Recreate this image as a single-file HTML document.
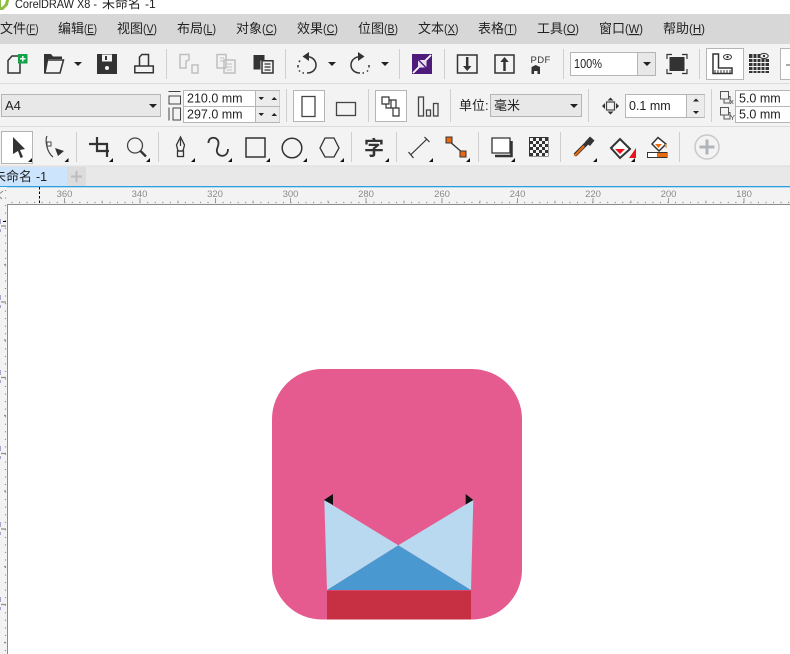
<!DOCTYPE html>
<html><head><meta charset="utf-8"><style>
html,body{margin:0;padding:0;background:#fff;width:790px;height:654px;overflow:hidden}
svg{display:block;position:absolute;left:0;top:0}
text{font-family:"Liberation Sans","Noto Sans CJK SC",sans-serif}
.m{font-size:13px;fill:#222}
.l{font-size:11.5px;fill:#222}
.f{font-size:12.5px;fill:#222}
.r{font-size:9.5px;fill:#8a8a8a;text-anchor:middle}
.s{stroke:#cfcfcf;stroke-width:1;fill:none}
.i{stroke:#333;stroke-width:1.5;fill:none}
.u{text-decoration:underline}
</style></head><body>
<svg width="790" height="654" viewBox="0 0 790 654" xmlns="http://www.w3.org/2000/svg">
<!-- backgrounds -->
<rect width="790" height="654" fill="#fff"/>
<rect y="14" width="790" height="30" fill="#d7d7d7"/>
<rect y="44" width="790" height="160" fill="#f3f3f3"/>
<path d="M0 83.5H790M0 126.5H790" stroke="#dcdcdc" stroke-width="1"/>
<rect y="166" width="790" height="20" fill="#e8e8e8"/>
<path d="M0 166H790" stroke="#dcdcdc"/>
<rect y="186" width="790" height="1.3" fill="#2a9fdf"/>
<rect x="0" y="187" width="7" height="467" fill="#f3f3f3"/>
<rect x="7" y="204" width="783" height="450" fill="#fff"/>
<path d="M7.500 654V204.500H790" stroke="#8c8c8c" stroke-width="1" fill="none"/>

<!-- title -->
<path d="M0 0H9L8 5L3 10H0Z" fill="#8cbf3f"/>
<path d="M1 0H6L5 4L2 7H1Z" fill="#fff"/>
<text x="15" y="8" font-size="11.7" fill="#222" textLength="82" lengthAdjust="spacingAndGlyphs">CorelDRAW X8 -</text>
<text x="102" y="8" font-size="13" fill="#222">未命名</text>
<text x="145" y="8" font-size="12" fill="#222">-1</text>

<!-- menu -->
<text class="m" x="0" y="33">文件</text><text class="l" x="26" y="33" textLength="12.500" lengthAdjust="spacingAndGlyphs">(<tspan class="u">F</tspan>)</text>
<text class="m" x="58" y="33">编辑</text><text class="l" x="84" y="33" textLength="13" lengthAdjust="spacingAndGlyphs">(<tspan class="u">E</tspan>)</text>
<text class="m" x="117" y="33">视图</text><text class="l" x="143" y="33" textLength="14" lengthAdjust="spacingAndGlyphs">(<tspan class="u">V</tspan>)</text>
<text class="m" x="177" y="33">布局</text><text class="l" x="203" y="33" textLength="13" lengthAdjust="spacingAndGlyphs">(<tspan class="u">L</tspan>)</text>
<text class="m" x="236" y="33">对象</text><text class="l" x="262" y="33" textLength="15" lengthAdjust="spacingAndGlyphs">(<tspan class="u">C</tspan>)</text>
<text class="m" x="297" y="33">效果</text><text class="l" x="323" y="33" textLength="15" lengthAdjust="spacingAndGlyphs">(<tspan class="u">C</tspan>)</text>
<text class="m" x="358" y="33">位图</text><text class="l" x="384" y="33" textLength="14" lengthAdjust="spacingAndGlyphs">(<tspan class="u">B</tspan>)</text>
<text class="m" x="418" y="33">文本</text><text class="l" x="444" y="33" textLength="14.500" lengthAdjust="spacingAndGlyphs">(<tspan class="u">X</tspan>)</text>
<text class="m" x="478" y="33">表格</text><text class="l" x="504" y="33" textLength="13" lengthAdjust="spacingAndGlyphs">(<tspan class="u">T</tspan>)</text>
<text class="m" x="537" y="33">工具</text><text class="l" x="563" y="33" textLength="16" lengthAdjust="spacingAndGlyphs">(<tspan class="u">O</tspan>)</text>
<text class="m" x="599" y="33">窗口</text><text class="l" x="625" y="33" textLength="18" lengthAdjust="spacingAndGlyphs">(<tspan class="u">W</tspan>)</text>
<text class="m" x="663" y="33">帮助</text><text class="l" x="689" y="33" textLength="16" lengthAdjust="spacingAndGlyphs">(<tspan class="u">H</tspan>)</text>

<!-- toolbar separators -->
<path class="s" d="M166.500 49V79M285.500 49V79M399.500 49V79M444.500 49V79M563.500 49V79M699.500 49V79"/>
<path class="s" d="M286.500 89V122M368.500 89V122M450.500 89V122M588.500 89V122M711.500 89V122"/>
<path class="s" d="M76.500 132V162M158.500 132V162M351.500 132V162M396.500 132V162M478.500 132V162M560.500 132V162M679.500 132V162"/>

<!-- new -->
<path class="i" d="M8 60.500L12 56H20V73H8Z"/>
<rect x="18" y="54" width="9.500" height="9.500" fill="#13a24a"/>
<path d="M22.800 56V61.500M20 58.800H25.500" stroke="#fff" stroke-width="1.400"/>
<!-- open -->
<path d="M44 73V54H51L53 56.500H62V59H48L45.500 73Z" fill="#333"/>
<path class="i" d="M47.500 60H63.500L60 73H45Z"/>
<path d="M74 62H82L78 66Z" fill="#222"/>
<!-- save -->
<path d="M97 54H117V74H97Z" fill="#333"/>
<rect x="102" y="54.500" width="10" height="7" fill="#f3f3f3"/>
<rect x="105" y="56" width="2" height="4" fill="#333"/>
<circle cx="107" cy="68" r="2" fill="#f3f3f3"/>
<!-- print -->
<path class="i" d="M139.500 66V57L142 54.500H148.500V66M134.800 66H153.300V72.800H134.800Z"/>
<!-- copy/paste group -->
<g stroke="#c0c0c0" stroke-width="1.500" fill="none">
<path d="M180 54.500H189V60L186 61V68H180Z"/>
<path d="M192 65H198V73H192Z"/>
<path d="M217 54.500H226V68H217ZM224 60H235V73H224Z"/>
<path d="M220 58H224M220 61H224M227 64H232M227 67H232M227 70H232" stroke-width="1"/>
</g>
<path d="M254 55.500H264V60H260V69H254Z" fill="#333" stroke="#333"/>
<path class="i" d="M262 60.800H273V73H262Z"/>
<path d="M264.500 64H270.500M264.500 67H270.500M264.500 70H270.500" stroke="#333" stroke-width="1.200"/>
<!-- undo redo -->
<path class="i" d="M306 56.500C312 56.500 316 60 316 65C316 70 312 73 307 73"/>
<path d="M304 73h-1.500M300 71.500l-1-1M298 67.500v-2.500M299 62l1-1.500" stroke="#333" stroke-width="1.500" fill="none"/>
<path d="M309 52V61L302.500 56.500Z" fill="#333"/>
<path d="M328 62H336L332 66Z" fill="#222"/>
<path class="i" d="M360 56.500C355 57 351 60 351 65C351 70 355 73 360 73"/>
<path d="M362.500 73h1.500M367 71.500l1-1M369 67.500v-2.500" stroke="#333" stroke-width="1.500" fill="none"/>
<path d="M358 52V61L364.500 56.500Z" fill="#333"/>
<path d="M381 62H389L385 66Z" fill="#222"/>
<!-- corel connect -->
<rect x="412" y="54" width="20" height="20" fill="#4f1b7a"/>
<path d="M431 55L424 62M413 73L420 66" stroke="#fff" stroke-width="1.800"/>
<path d="M418 60.500L425 67.500L418 67.500ZM426.500 67L419.500 60L426.500 60Z" fill="#e8e0ef"/>
<!-- import export -->
<path class="i" d="M457.500 55H477V73H457.500Z"/>
<path d="M467.200 57V67" stroke="#333" stroke-width="2.500"/>
<path d="M463 66H471.500L467.200 71Z" fill="#333"/>
<path class="i" d="M495 55H514V73H495Z"/>
<path d="M504.500 61V71" stroke="#333" stroke-width="2.500"/>
<path d="M500.300 62H508.800L504.500 57Z" fill="#333"/>
<text x="530.500" y="63" font-size="9.500" fill="#333" letter-spacing=".4">PDF</text>
<path d="M531.500 74V67L535.700 65L540 67V74Z" fill="#333"/>
<path d="M534 74V71H537.500V74" fill="#eee"/>
<!-- zoom combo -->
<rect x="570.500" y="52.500" width="85" height="23" fill="#fff" stroke="#b5b5b5"/>
<rect x="638" y="53" width="17" height="22" fill="#e8e8e8"/>
<path d="M637.500 53V75" stroke="#b5b5b5"/>
<text x="574" y="68" class="f" textLength="28" lengthAdjust="spacingAndGlyphs">100%</text>
<path d="M643 62H651L647 66Z" fill="#222"/>
<!-- full page -->
<path d="M667 59V54.500H672M682 54.500H687V59M687 69V73.500H682M672 73.500H667V69" stroke="#333" stroke-width="1.200" fill="none"/>
<rect x="669.500" y="57" width="15" height="14" fill="#333"/>
<!-- rulers toggle -->
<rect x="706.500" y="48.500" width="37" height="31" fill="#fff" stroke="#b5b5b5"/>
<path class="i" d="M713 54V73.500H732V68H718.500V54Z"/>
<path d="M715 70v3M718 70v3M721 70v3M724 70v3M727 70v3M730 70v3" stroke="#333"/>
<ellipse cx="727.500" cy="57" rx="4" ry="2.500" fill="none" stroke="#333" stroke-width="1"/>
<circle cx="727.500" cy="57" r="1.200" fill="#333"/>
<path fill="#333" d="M749 54H760V58H769V73H749Z"/>
<path d="M749 58.500H769M749 62.500H769M749 66.500H769M749 70.500H769M753 54V73M757 54V73M761 58V73M765 58V73" stroke="#f3f3f3" stroke-width="1"/>
<ellipse cx="764" cy="56" rx="4.200" ry="2.600" fill="#f3f3f3" stroke="#333"/>
<circle cx="764" cy="56" r="1.200" fill="#333"/>
<rect x="780.500" y="48.500" width="12" height="31" fill="#fff" stroke="#b5b5b5"/>
<path d="M786 65H790" stroke="#555"/>

<!-- property bar -->
<rect x="1.500" y="94.500" width="159" height="22" fill="#e8e8e8" stroke="#b5b5b5"/>
<text x="5" y="110" font-size="13" fill="#222">A4</text>
<path d="M149 104H157L153 108Z" fill="#222"/>
<path d="M168.500 91.500H180.500" stroke="#444" fill="none"/>
<rect x="169" y="96" width="11.500" height="8" fill="none" stroke="#444"/>
<path d="M169 107.500V120.500" stroke="#444"/>
<rect x="173" y="108" width="7.500" height="12" fill="none" stroke="#444"/>
<rect x="183.500" y="90.500" width="96" height="32" fill="#fff" stroke="#b5b5b5"/>
<rect x="256" y="91" width="23.500" height="31" fill="#ececec"/>
<path d="M183.500 106.500H279.500M255.500 90.500V122.500" stroke="#b5b5b5"/>
<text x="187" y="102.500" class="f">210.0 mm</text>
<text x="187" y="118.500" class="f">297.0 mm</text>
<path d="M258.500 97H264L261.200 100ZM271.500 100H277L274.200 97ZM258.500 113H264L261.200 116ZM271.500 116H277L274.200 113Z" fill="#222"/>
<rect x="293.500" y="90.500" width="31" height="31" fill="#fff" stroke="#b5b5b5"/>
<rect x="302" y="96.500" width="13" height="20" fill="none" stroke="#444" stroke-width="1.300"/>
<rect x="336.500" y="102.500" width="19" height="13" fill="none" stroke="#444" stroke-width="1.300"/>
<rect x="375.500" y="90.500" width="31" height="31" fill="#fff" stroke="#b5b5b5"/>
<path d="M382 97H389V104H382ZM386 104V108H391V100H389M391 100H396V108H391ZM393 108H399V116H393Z" fill="none" stroke="#333" stroke-width="1.200"/>
<rect x="418.500" y="97" width="5" height="19" fill="none" stroke="#444" stroke-width="1.300"/>
<rect x="426.500" y="110" width="4" height="6" fill="none" stroke="#444" stroke-width="1.300"/>
<rect x="433.500" y="103.500" width="4.500" height="12.500" fill="none" stroke="#444" stroke-width="1.300"/>
<text x="459" y="110" font-size="13" fill="#222">单位:</text>
<rect x="490.500" y="94.500" width="91" height="22" fill="#e8e8e8" stroke="#b5b5b5"/>
<text x="494" y="110" font-size="13" fill="#222">毫米</text>
<path d="M570 104H578L574 108Z" fill="#222"/>
<rect x="606.500" y="102" width="8" height="8" fill="none" stroke="#444" stroke-width="1.200"/>
<path d="M610.500 97.500L613.500 100.500H607.500ZM610.500 114.500L613.500 111.500H607.500ZM602 106L605 103V109ZM619 106L616 103V109Z" fill="#333"/>
<rect x="625.500" y="94.500" width="79" height="23" fill="#fff" stroke="#b5b5b5"/>
<rect x="687" y="95" width="17.500" height="22" fill="#ececec"/>
<path d="M686.500 94.500V117.500" stroke="#b5b5b5"/>
<text x="629" y="110" class="f">0.1 mm</text>
<path d="M693 101.500H699L696 98.500ZM693 111H699L696 114Z" fill="#222"/>
<path d="M720.500 91.500H728.500V99H720.500ZM724 99V103H730V96.500H728.500" fill="none" stroke="#555"/>
<path d="M720.500 107.500H728.500V115H720.500ZM724 115V119H730V112.500H728.500" fill="none" stroke="#555"/>
<text x="730" y="104" font-size="7.500" fill="#444">x</text>
<text x="730" y="120" font-size="7.500" fill="#444">Y</text>
<rect x="735.500" y="90.500" width="60" height="32" fill="#fff" stroke="#b5b5b5"/>
<path d="M735.500 106.500H790" stroke="#b5b5b5"/>
<text x="739" y="102.500" class="f">5.0 mm</text>
<text x="739" y="118.500" class="f">5.0 mm</text>

<!-- toolbox -->
<rect x="1.500" y="131.500" width="31" height="32" fill="#fff" stroke="#b5b5b5"/>
<path d="M13 137L25 149L20 150L23 157L20.500 158L18 151L13 154Z" fill="#333"/>
<path d="M47 136C45 140 46.500 152 53 157" fill="none" stroke="#444" stroke-width="1.200"/>
<rect x="47" y="142" width="4" height="4" fill="#fff" stroke="#444"/>
<path d="M55 148L64 151L58 156Z" fill="#333"/>
<path d="M89 144H107V157M97 137V151H109" fill="none" stroke="#333" stroke-width="2.200"/>
<circle cx="135" cy="145.500" r="7.500" fill="none" stroke="#444" stroke-width="1.300"/>
<path d="M140.500 151L146 156.500" stroke="#333" stroke-width="2.300"/>
<path d="M180.500 137L176.500 145L178 151H183L184.500 145Z" fill="none" stroke="#333" stroke-width="1.300"/>
<path d="M180.500 139V146" stroke="#333" stroke-width="1.200"/>
<rect x="177.500" y="151" width="6" height="5.500" fill="none" stroke="#333" stroke-width="1.300"/>
<path d="M208.500 143C208 136 218.500 136 218.500 143C218.500 147 216 149 217 152C218.500 157.500 228 157.500 228 149" fill="none" stroke="#333" stroke-width="1.800"/>
<rect x="246" y="138" width="19" height="19" fill="none" stroke="#333" stroke-width="1.500"/>
<circle cx="292" cy="148" r="9.800" fill="none" stroke="#333" stroke-width="1.500"/>
<path d="M325 138H334L339 148L334 157H325L320 148Z" fill="none" stroke="#333" stroke-width="1.300"/>
<text x="364" y="155" font-size="20" font-weight="700" fill="#333">字</text>
<path d="M410.500 155L427 139M408.500 152L413.500 158M424.500 137L429.500 142" stroke="#333" stroke-width="1.200"/>
<path d="M449 141L464 154" stroke="#333" stroke-width="1.300"/>
<rect x="446" y="137" width="6" height="6" fill="#e86a10" stroke="#333"/>
<rect x="460" y="151" width="6" height="6" fill="#e86a10" stroke="#333"/>
<path d="M492 138H510V153H492Z" fill="#fff" stroke="#333" stroke-width="1.300"/>
<path d="M511.500 141V156H495" fill="none" stroke="#333" stroke-width="2.500"/>
<rect x="529" y="137" width="19.500" height="19.500" fill="#333"/>
<path d="M530 138h3v3h-3zM536 138h3v3h-3zM542 138h3v3h-3zM533 141h3v3h-3zM539 141h3v3h-3zM545 141h3v3h-3zM530 144h3v3h-3zM536 144h3v3h-3zM542 144h3v3h-3zM533 147h3v3h-3zM539 147h3v3h-3zM545 147h3v3h-3zM530 150h3v3h-3zM536 150h3v3h-3zM542 150h3v3h-3zM533 153h3v3h-3zM539 153h3v3h-3zM545 153h3v3h-3z" fill="#f3f3f3"/>
<path d="M575 155L588 142" stroke="#333" stroke-width="4"/>
<path d="M574.500 156L584 146" stroke="#e86a10" stroke-width="2.200"/>
<path d="M585 142L590 136.500L594.500 140.500L590 146Z" fill="#333"/>
<path d="M611 148L620 139L630 149L620 158Z" fill="#fff" stroke="#333" stroke-width="2"/>
<path d="M615 149H625L620 154Z" fill="#e8121c"/>
<path d="M636 158V148L629 158Z" fill="#e8121c"/>
<path d="M652 144L658 137.500L666 144L659 151Z" fill="#fff" stroke="#333" stroke-width="1.500"/>
<path d="M655 144H662L658.500 148Z" fill="#e86a10"/>
<rect x="647.500" y="152.500" width="19.500" height="5" fill="#fff" stroke="#333"/>
<rect x="657" y="153" width="10" height="4" fill="#e86a10"/>
<path d="M666 148V144" stroke="#e8a060" stroke-width="1.500"/>
<circle cx="707" cy="147" r="12" fill="none" stroke="#c9c9c9" stroke-width="1.500"/>
<path d="M707 139.500V154.500M699.500 147H714.500" stroke="#b0b5bb" stroke-width="3"/>
<!-- corner marks -->
<path fill="#111" d="M28 162L32 158V162ZM64.500 162L68.500 158V162ZM109 162L113 158V162ZM146 162L150 158V162ZM191 162L195 158V162ZM228 162L232 158V162ZM266 162L270 158V162ZM303 162L307 158V162ZM340 162L344 158V162ZM385 162L389 158V162ZM429 162L433 158V162ZM466 162L470 158V162ZM511 162L515 158V162ZM593 162L597 158V162ZM631 162L635 158V162Z"/>

<!-- tabs -->
<rect x="0" y="167" width="67" height="19" fill="#cde4fd"/>
<text x="-7" y="181" font-size="13" fill="#222">未命名</text>
<text x="36" y="181" font-size="12.500" fill="#222">-1</text>
<rect x="67" y="167" width="19" height="19" fill="#dcdcdc"/>
<path d="M76.500 171V182M71 176.500H82" stroke="#bdbdbd" stroke-width="2"/>

<!-- top ruler -->
<text class="r" x="64.500" y="197">360</text><text class="r" x="139.500" y="197">340</text><text class="r" x="215" y="197">320</text><text class="r" x="290.500" y="197">300</text><text class="r" x="366" y="197">280</text><text class="r" x="442" y="197">260</text><text class="r" x="517.500" y="197">240</text><text class="r" x="593" y="197">220</text><text class="r" x="668.500" y="197">200</text><text class="r" x="744" y="197">180</text>
<path d="M64.500 198V203M140 198V203M215.500 198V203M290.500 198V203M366 198V203M442 198V203M517.500 198V203M593 198V203M668.500 198V203M744 198V203" stroke="#9a9a9a"/>
<path d="M102 200.500V203M178 200.500V203M253 200.500V203M328 200.500V203M404 200.500V203M480 200.500V203M555 200.500V203M631 200.500V203M706 200.500V203" stroke="#a5a5a5"/>
<path d="M11.500 202.500H790" stroke="#888" stroke-width="1.200" stroke-dasharray="1 6.540"/>
<path d="M39.500 187V204" stroke="#000" stroke-width="1" stroke-dasharray="2.500 2"/>
<path d="M0 193.500L3 191M0 197L2 199" stroke="#888" stroke-width="1"/>

<!-- left ruler -->
<path d="M5.500 190V654" stroke="#888" stroke-width="1.200" stroke-dasharray="1 6.540"/>
<path d="M1 226H6M1 302H6M1 377.500H6M1 453.500H6M1 529H6M1 604.500H6" stroke="#8f8f8f" stroke-width="1.200"/>
<path d="M4 264.500H6M4 340H6M4 415.500H6M4 491H6M4 566.500H6M4 642.500H6" stroke="#8f8f8f" stroke-width="1.200"/>
<path d="M3 221.500H6" stroke="#000"/>
<path d="M0 219V224M0 229V232M0 295V300M0 305V308M0 370V375M0 380V383M0 446V451M0 456V459M0 522V527M0 532V535M0 597V602M0 607V610" stroke="#a9a4cc" stroke-width="2"/>

<!-- artwork -->
<rect x="272" y="369" width="250" height="250.500" rx="50" ry="50" fill="#e55b8f"/>
<path d="M327 590L398.300 545.300L471 590Z" fill="#4a98d0"/>
<path d="M324.300 500L398.300 545.300L327 590Z" fill="#b9d9f0"/>
<path d="M473.300 500L398.300 545.300L471 590Z" fill="#b9d9f0"/>
<rect x="327" y="590.500" width="144" height="29" fill="#c73043"/>
<path d="M333 494V505L324 500Z" fill="#111"/>
<path d="M465.700 494V504.500L473.300 500Z" fill="#111"/>
</svg>
</body></html>
